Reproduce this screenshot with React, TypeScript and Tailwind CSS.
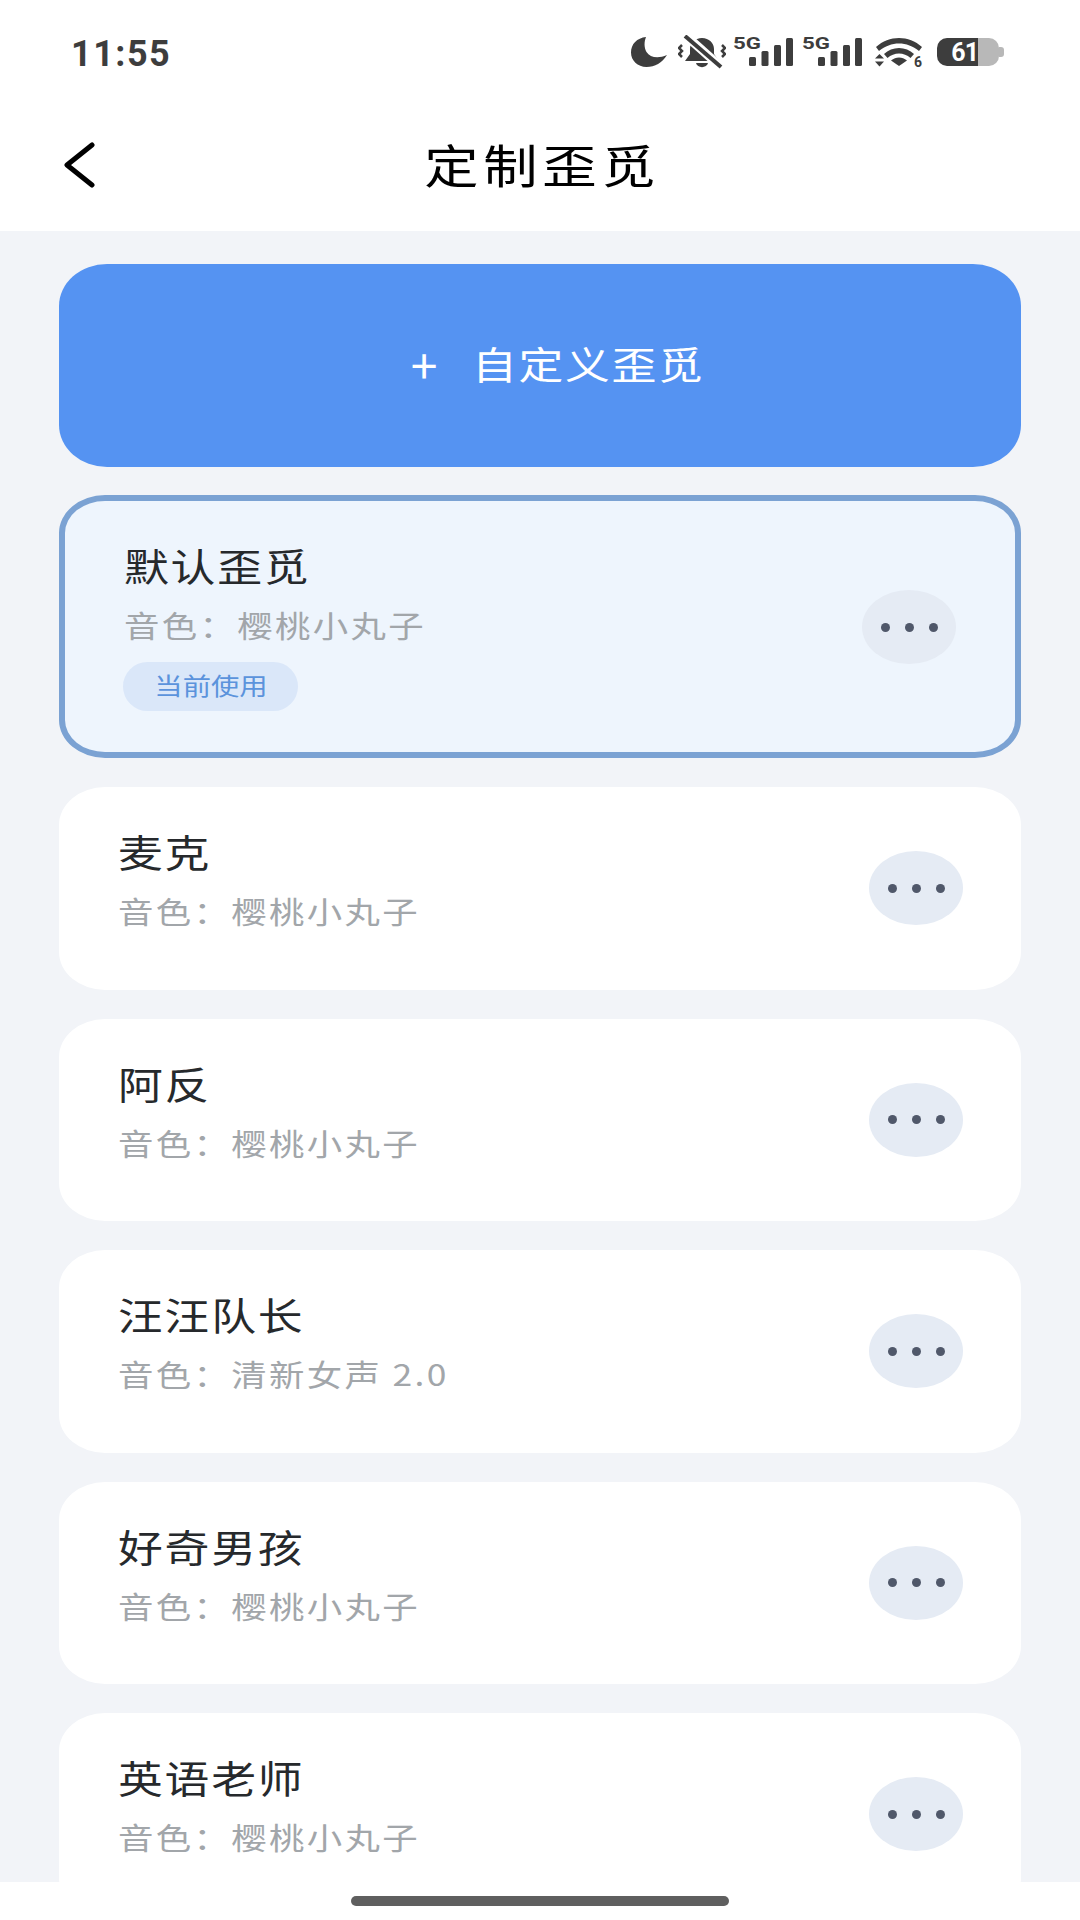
interface Persona {
  name: string;
  voice: string;
}

const personas: Persona[] = [
  { name: "麦克", voice: "樱桃小丸子" },
  { name: "阿反", voice: "樱桃小丸子" },
  { name: "汪汪队长", voice: "清新女声 2.0" },
  { name: "好奇男孩", voice: "樱桃小丸子" },
  { name: "英语老师", voice: "樱桃小丸子" },
];

function Signal() {
  return (
    <svg width="60" height="40" viewBox="0 0 60 40" fill="#3d3d3d" aria-hidden>
      <text
        x="0"
        y="16.500"
        fontFamily="Roboto, sans-serif"
        fontWeight="700"
        fontSize="17"
        textLength="28"
        lengthAdjust="spacingAndGlyphs"
      >
        5G
      </text>
      <rect x="16" y="25" width="7" height="9" rx="1.5" />
      <rect x="28.5" y="19" width="7" height="15" rx="1.5" />
      <rect x="41" y="13" width="7" height="21" rx="1.5" />
      <rect x="53" y="6" width="7" height="28" rx="1.5" />
    </svg>
  );
}

function StatusIcons() {
  return (
    <div className="flex items-center">
      <svg width="36" height="30" viewBox="0 0 36 30" fill="#3d3d3d" aria-hidden>
        <path d="M15 0C6 1 0 7 0 15.500C0 23.500 6.500 30 15.500 30C24 30 31 26 36 18C27 22 19 20.500 15.500 15C13 10.500 13 5 15 0Z" />
      </svg>
      <svg className="ml-[11px]" width="48" height="34" viewBox="0 0 48 34" fill="#3d3d3d" aria-hidden>
        <path d="M24 3C31 3 36 8 36 14V19L41 26H7L12 19V14C12 8 17 3 24 3Z" />
        <path d="M18 28H30C29 33.500 19 33.500 18 28Z" />
        <path d="M7 0L43 32" stroke="#ffffff" strokeWidth="9" />
        <path d="M7 1L43 32" stroke="#3d3d3d" strokeWidth="4" />
        <path d="M4 10L1 13L4 16L1 19L4 22" stroke="#3d3d3d" strokeWidth="2.500" fill="none" />
        <path d="M44 10L47 13L44 16L47 19L44 22" stroke="#3d3d3d" strokeWidth="2.500" fill="none" />
      </svg>
      <div className="ml-[7px]">
        <Signal />
      </div>
      <div className="ml-[9px]">
        <Signal />
      </div>
      <svg className="ml-[13px]" width="48" height="36" viewBox="0 -3 48 36" fill="#3d3d3d" aria-hidden>
        <path d="M1 10C14 -2 34 -2 47 10L44 14C32 4 16 4 4 14Z" />
        <path d="M9 17C17 9 31 9 39 17L35.500 21C29 15 19 15 12.500 21Z" />
        <path d="M16 23.500C21 19.500 27 19.500 32 23.500L24 29Z" />
        <path d="M4.500 17L9 21.500H0Z" />
        <path d="M4.500 29.500L9 24.500H0Z" />
        <text x="39" y="30" fontFamily="Roboto, sans-serif" fontWeight="700" fontSize="14">
          6
        </text>
      </svg>
      <div className="ml-[14px] flex h-[28px] items-center">
        <div className="flex h-[28px] w-[41px] items-center justify-end rounded-l-[10px] bg-[#3d3d3d] text-[25px] leading-none font-bold tracking-[-1px] text-white font-['Roboto',sans-serif]">
          61
        </div>
        <div className="h-[28px] w-[21px] rounded-r-[10px] bg-[#b8b8b8]" />
        <div className="h-[10px] w-[5px] rounded-r-[3px] bg-[#b8b8b8]" />
      </div>
    </div>
  );
}

function MoreButton() {
  return (
    <div className="flex h-[74px] w-[94px] items-center justify-center gap-[15px] rounded-[50%] bg-[#e5ebf4]">
      <span className="h-[9px] w-[9px] rounded-full bg-[#50586a]" />
      <span className="h-[9px] w-[9px] rounded-full bg-[#50586a]" />
      <span className="h-[9px] w-[9px] rounded-full bg-[#50586a]" />
    </div>
  );
}

function PersonaText({ name, voice }: Persona) {
  return (
    <div className="-mt-[2px]">
      <div className="h-[44px] origin-left scale-x-[1.18] text-[38px] leading-[44px] tracking-[1.500px] whitespace-nowrap text-[#26292c]">
        {name}
      </div>
      <div className="mt-[17px] flex h-[40px] origin-left scale-x-[1.18] text-[30px] leading-[40px] tracking-[2px] whitespace-nowrap text-[#a2a6aa]">
        <span className="w-[96px]">音色：</span>
        <span>{voice}</span>
      </div>
    </div>
  );
}

export default function App() {
  return (
    <div className="flex h-[1920px] w-[1080px] flex-col overflow-hidden bg-[#f2f4f8] font-['Noto_Sans_CJK_SC','Noto_Sans',sans-serif]">
      <header className="h-[231px] shrink-0 bg-white">
        <div className="flex h-[104px] items-center justify-between pl-[71px] pr-[76px]">
          <span className="pt-[4px] text-[36px] font-bold tracking-[1.500px] text-[#3d3d3d] font-['Roboto',sans-serif]">11:55</span>
          <StatusIcons />
        </div>
        <div className="relative flex h-[122px] items-center justify-center">
          <svg className="absolute left-[62px] top-[38px]" width="34" height="46" viewBox="0 0 34 46" fill="none" stroke="#000000" strokeWidth="5" strokeLinecap="round" strokeLinejoin="round" aria-hidden>
            <path d="M30 3L5 23L30 43" />
          </svg>
          <h1 className="scale-x-[1.18] pb-[4px] pl-[3px] text-[46px] leading-[60px] font-normal tracking-[4px] text-black">定制歪觅</h1>
        </div>
      </header>

      <main className="min-h-0 flex-1 overflow-hidden px-[59px] pt-[33px]">
        <button
          type="button"
          className="flex h-[203px] w-full items-center justify-start rounded-[48px/42px] bg-[#5593f2] pb-[6px] pl-[349px] text-white"
        >
          <span className="w-[32px] text-center text-[48px] leading-none">+</span>
          <span className="ml-[32px] origin-left scale-x-[1.18] text-[38px] tracking-[1.400px] whitespace-nowrap">自定义歪觅</span>
        </button>

        <section className="mt-[28px] flex h-[263px] items-start justify-between rounded-[46px/38px] border-[6px] border-[#7ba2d3] bg-[#eef5fd] pt-[44px] pl-[59px] pr-[59px]">
          <div>
            <PersonaText name="默认歪觅" voice="樱桃小丸子" />
            <span className="mt-[18px] -ml-[1px] flex h-[49px] w-[175px] items-center justify-center rounded-full bg-[#dae7f9] pb-[3px] whitespace-nowrap text-[#5b93dc]">
              <span className="scale-x-[1.18] text-[24px]">当前使用</span>
            </span>
          </div>
          <div className="mt-[45px]">
            <MoreButton />
          </div>
        </section>

        <div className="mt-[29px] flex flex-col gap-[29px]">
          {personas.map((persona) => (
            <section
              key={persona.name}
              className="flex h-[202.500px] shrink-0 items-start justify-between rounded-[46px/38px] bg-white pt-[44px] pl-[59px] pr-[58px]"
            >
              <PersonaText {...persona} />
              <div className="mt-[20px]">
                <MoreButton />
              </div>
            </section>
          ))}
        </div>
      </main>

      <footer className="flex h-[38px] shrink-0 justify-center bg-white pt-[14px]">
        <div className="h-[10px] w-[378px] rounded-full bg-[#5f5f5f]" />
      </footer>
    </div>
  );
}
